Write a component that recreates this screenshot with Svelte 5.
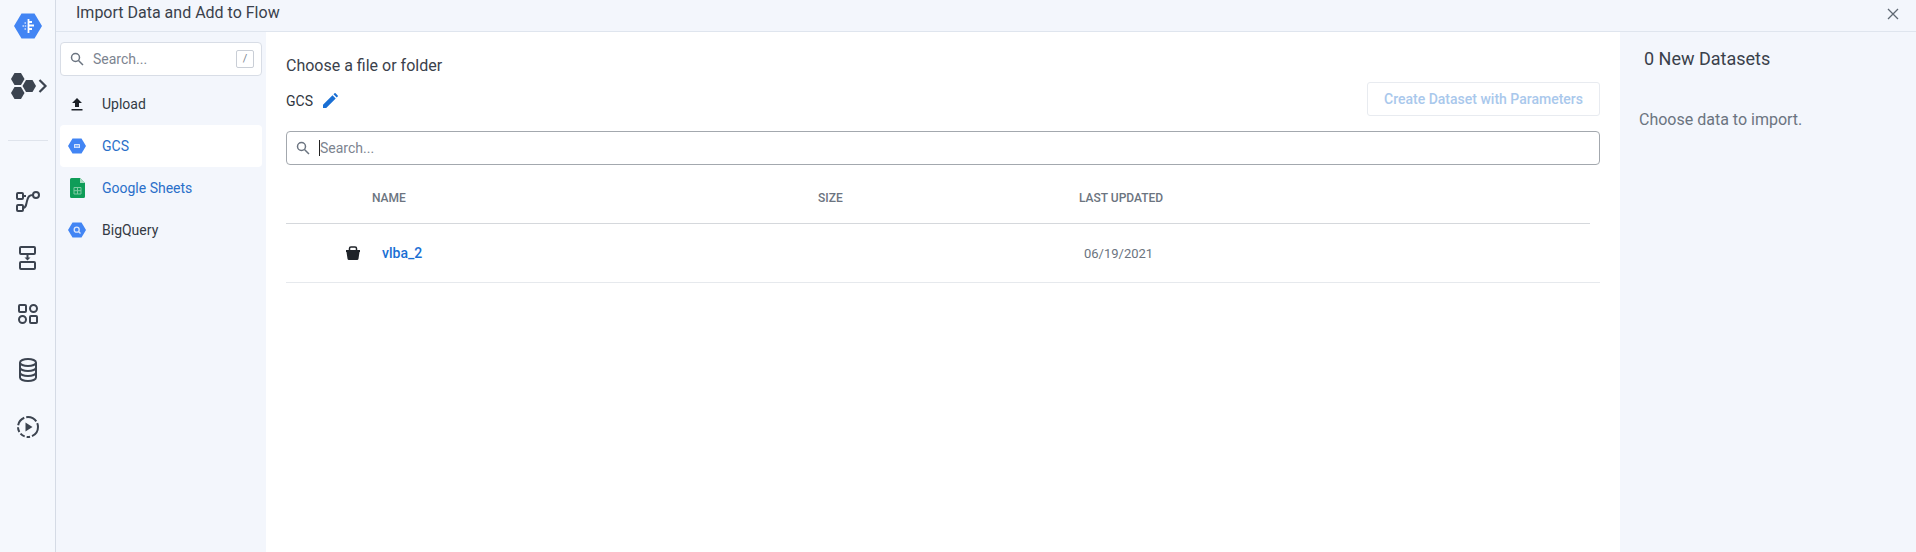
<script>
  const sources = [
    { name: 'Upload', icon: 'upload' },
    { name: 'GCS', icon: 'gcs', active: true, link: true },
    { name: 'Google Sheets', icon: 'sheets', link: true },
    { name: 'BigQuery', icon: 'bq' }
  ];
</script>

<div class="page">
  <nav class="rail">
    <svg class="logo" width="28" height="26" viewBox="0 0 28 26">
      <path d="M7.5 0.500h13L28 13l-7.500 12.500h-13L0 13z" fill="#4285f4" />
      <path d="M14.500 6v14" stroke="#fff" stroke-width="1.800" />
      <path d="M15 9h3M15 12.500h5M15 16h3" stroke="#fff" stroke-width="1.800" />
      <path d="M10.500 10h2M8.500 13h4M10.500 16h2" stroke="#cfe0fb" stroke-width="1.500" stroke-dasharray="1.500 .7" />
    </svg>
    <button class="hexes" aria-label="Apps">
      <svg width="38" height="28" viewBox="0 0 38 28">
        <g fill="#3c4450">
          <path d="M4.500 1h6.500l3.500 6-3.500 6H4.500L1 7z" />
          <path d="M4.500 15h6.500l3.500 6-3.500 6H4.500L1 21z" />
          <path d="M16 8h6.500l3.500 6-3.500 6H16l-3.500-6z" />
        </g>
        <path d="M29.500 8l6 6-6 6" fill="none" stroke="#3c4450" stroke-width="2.200" />
      </svg>
    </button>
    <div class="rail-rule"></div>
    <div class="rail-icons">
      <svg width="26" height="24" viewBox="0 0 26 24" fill="none" stroke="#3c4450" stroke-width="2">
        <rect x="2" y="3" width="6" height="6" rx="1" />
        <rect x="2" y="15" width="6" height="6" rx="1" />
        <circle cx="21" cy="5" r="3" />
        <path d="M8 6h3M8 18c3 0 3-3 4-7s2-6 6-6" />
      </svg>
      <svg width="24" height="26" viewBox="0 0 24 26" fill="none" stroke="#3c4450" stroke-width="2">
        <rect x="4" y="2" width="15" height="7" rx="1" />
        <rect x="4" y="17" width="15" height="7" rx="1" />
        <path d="M11.500 9v5" />
        <path d="M8.500 12.500h6l-3 3z" fill="#3c4450" stroke="none" />
      </svg>
      <svg width="24" height="24" viewBox="0 0 24 24" fill="none" stroke="#3c4450" stroke-width="2">
        <rect x="3" y="3" width="7" height="7" rx="1" />
        <circle cx="17.500" cy="6.500" r="3.500" />
        <circle cx="6.500" cy="17.500" r="3.500" />
        <rect x="14" y="14" width="7" height="7" rx="1" />
      </svg>
      <svg width="24" height="26" viewBox="0 0 24 26" fill="none" stroke="#3c4450" stroke-width="2">
        <ellipse cx="12" cy="5.500" rx="8" ry="3.500" />
        <path d="M4 5.500v15c0 2 3.500 3.500 8 3.500s8-1.500 8-3.500v-15" />
        <path d="M4 10.500c0 2 3.500 3.500 8 3.500s8-1.500 8-3.500M4 15.500c0 2 3.500 3.500 8 3.500s8-1.500 8-3.500" />
      </svg>
      <svg width="26" height="26" viewBox="0 0 26 26" fill="none" stroke="#3c4450" stroke-width="2">
        <circle cx="13" cy="13" r="10" stroke-dasharray="11.500 2 3.500 2 5 2 5 2 10 2 11.500 2" />
        <path d="M10.500 8.500l7 4.500-7 4.500z" fill="#3c4450" stroke="none" />
      </svg>
    </div>
  </nav>

  <div class="dialog">
    <header class="title-bar">
      <span>Import Data and Add to Flow</span>
      <svg width="12" height="12" viewBox="0 0 12 12" stroke="#5f6873" stroke-width="1.300"><path d="M1 1l10 10M11 1L1 11" /></svg>
    </header>

    <div class="body">
      <aside class="sources">
        <div class="source-search">
          <svg class="mag" width="14" height="14" viewBox="0 0 14 14" fill="none" stroke="#6b7480" stroke-width="1.500"><circle cx="5.500" cy="5.500" r="4" /><path d="M8.500 8.500l4.500 4.500" /></svg>
          <span class="placeholder">Search...</span>
          <kbd>/</kbd>
        </div>
        <ul>
          {#each sources as s}
            <li class:active={s.active} class:link={s.link}>
              <span class="src-icon">
                {#if s.icon === 'upload'}
                  <svg width="14" height="14" viewBox="0 0 14 14"><path d="M7 1l5 5H9v4H5V6H2z M1.500 12h11v1.500h-11z" fill="#1c2128" /></svg>
                {:else if s.icon === 'sheets'}
                  <svg width="15" height="20" viewBox="0 0 15 20">
                    <path d="M1.500 0H10l5 5v13.500a1.500 1.500 0 0 1-1.500 1.500h-12A1.500 1.500 0 0 1 0 18.500v-17A1.500 1.500 0 0 1 1.500 0z" fill="#0f9d58" />
                    <path d="M10 0l5 5h-5z" fill="#a8dcc0" />
                    <path d="M4 9.500h7v6.500H4zM7.500 9.500V16M4 12.700h7" fill="none" stroke="#7fcaa2" stroke-width="1" />
                  </svg>
                {:else}
                  <svg width="18" height="16" viewBox="0 0 18 16">
                    <path d="M4.500 0.500h9L18 8l-4.500 7.500h-9L0 8z" fill="#4285f4" />
                    {#if s.icon === 'gcs'}
                      <rect x="6" y="6" width="6" height="4" rx="0.500" fill="#dbe7fc" />
                      <path d="M7 7.500h4M7 8.700h4" stroke="#4285f4" stroke-width="0.600" />
                    {:else}
                      <circle cx="8.700" cy="7.700" r="2.500" fill="none" stroke="#dbe7fc" stroke-width="1.300" />
                      <path d="M10.500 9.500l2 2" stroke="#dbe7fc" stroke-width="1.300" />
                    {/if}
                  </svg>
                {/if}
              </span>
              {s.name}
            </li>
          {/each}
        </ul>
      </aside>

      <main class="main">
        <h2>Choose a file or folder</h2>
        <div class="crumb-row">
          <div class="crumb">
            <span>GCS</span>
            <svg width="16" height="16" viewBox="0 0 16 16"><path d="M1 15v-3.200L10.500 2.300l3.200 3.200L4.200 15zM11.500 1.300l1-1a.8.8 0 0 1 1.100 0l2.100 2.100a.8.8 0 0 1 0 1.100l-1 1z" fill="#1a6fd4" /></svg>
          </div>
          <button class="param-btn" disabled>Create Dataset with Parameters</button>
        </div>
        <div class="file-search">
          <svg class="mag" width="14" height="14" viewBox="0 0 14 14" fill="none" stroke="#6b7480" stroke-width="1.500"><circle cx="5.500" cy="5.500" r="4" /><path d="M8.500 8.500l4.500 4.500" /></svg>
          <span class="caret"></span>
          <span class="placeholder">Search...</span>
        </div>
        <div class="table-head">
          <span class="name-col">NAME</span>
          <span>SIZE</span>
          <span>LAST UPDATED</span>
        </div>
        <div class="table-row">
          <svg class="bucket" width="14" height="14" viewBox="0 0 14 14">
            <path d="M3.500 5V2.500A1.500 1.500 0 0 1 5 1h4a1.500 1.500 0 0 1 1.500 1.500V5" fill="none" stroke="#1f2329" stroke-width="1.500" />
            <path d="M0 4h14v2h-.5l-1 6.700a1.500 1.500 0 0 1-1.500 1.300H3a1.500 1.500 0 0 1-1.500-1.300L.5 6H0z" fill="#1f2329" />
          </svg>
          <a href="#top" class="bucket-name">vlba_2</a>
          <span></span>
          <span class="date">06/19/2021</span>
        </div>
      </main>

      <aside class="summary">
        <h3>0 New Datasets</h3>
        <p>Choose data to import.</p>
      </aside>
    </div>
  </div>
</div>

<style>
  :global(body) {
    margin: 0;
    background: #f3f6fc;
  }

  .page {
    display: flex;
    height: 552px;
    font-family: Roboto, "Liberation Sans", sans-serif;
    color: #2f3640;
    overflow: hidden;
  }

  .rail {
    width: 55px;
    flex: none;
    display: flex;
    flex-direction: column;
    align-items: center;
    border-right: 1px solid #d5dbe5;
    background: #f5f8fd;
  }
  .logo {
    margin-top: 13px;
    margin-left: 1px;
  }
  .hexes {
    margin: 33px 0 0 3px;
    padding: 0;
    border: 0;
    background: none;
    height: 28px;
    display: block;
  }
  .rail-rule {
    width: 40px;
    height: 1px;
    background: #dfe4ec;
    margin-top: 40px;
  }
  .rail-icons {
    display: flex;
    flex-direction: column;
    align-items: center;
    gap: 31px;
    margin-top: 49px;
  }

  .dialog {
    flex: 1;
    min-width: 0;
    display: flex;
    flex-direction: column;
  }
  .title-bar {
    height: 31px;
    flex: none;
    padding: 0 17px 0 20px;
    display: flex;
    align-items: center;
    justify-content: space-between;
    font-size: 16px;
    border-bottom: 1px solid #dfe5ee;
  }
  .title-bar span {
    margin-top: -6px;
    color: #3a414b;
  }
  .title-bar svg {
    margin-top: -3px;
  }
  .body {
    flex: 1;
    display: flex;
    min-height: 0;
  }

  .sources {
    width: 210px;
    flex: none;
    padding: 10px 0 0 4px;
    box-sizing: border-box;
  }
  .source-search {
    width: 202px;
    height: 34px;
    box-sizing: border-box;
    background: #fff;
    border: 1px solid #d8dde6;
    border-radius: 4px;
    display: flex;
    align-items: center;
    padding: 0 7px 0 9px;
    font-size: 14px;
  }
  .placeholder {
    color: #7c8490;
    font-size: 14px;
  }
  .source-search .placeholder {
    margin-left: 9px;
    flex: 1;
  }
  kbd {
    width: 16px;
    height: 16px;
    border: 1px solid #c9ced6;
    border-radius: 2px;
    font: 11px Roboto, sans-serif;
    color: #7c8490;
    text-align: center;
    line-height: 16px;
  }
  .sources ul {
    list-style: none;
    margin: 7px 0 0;
    padding: 0;
  }
  .sources li {
    width: 202px;
    height: 42px;
    display: flex;
    align-items: center;
    font-size: 14px;
    border-radius: 4px;
    color: #333a44;
  }
  .sources li.link {
    color: #2a6fc9;
  }
  .sources li.active {
    background: #fff;
  }
  .src-icon {
    width: 34px;
    flex: none;
    display: flex;
    justify-content: center;
    margin-right: 8px;
  }

  .main {
    flex: 1;
    min-width: 0;
    background: #fff;
    padding: 0 20px;
  }
  h2 {
    font-size: 16px;
    font-weight: 400;
    margin: 0;
    padding-top: 24px;
    line-height: 19px;
    color: #3a414b;
  }
  .crumb-row {
    display: flex;
    justify-content: space-between;
    height: 34px;
    margin-top: 7px;
    margin-bottom: 15px;
  }
  .crumb {
    display: flex;
    align-items: center;
    gap: 9px;
    font-size: 14px;
    height: 25px;
    margin-top: 6px;
  }
  .param-btn {
    width: 233px;
    height: 34px;
    background: #fff;
    border: 1px solid #e8ebf0;
    border-radius: 3px;
    color: #a9c8ec;
    font: 500 14px Roboto, sans-serif;
  }
  .file-search {
    height: 34px;
    box-sizing: border-box;
    border: 1px solid #a3a8ae;
    border-radius: 4px;
    display: flex;
    align-items: center;
    padding-left: 9px;
  }
  .caret {
    width: 1px;
    height: 16px;
    background: #222;
    margin-left: 9px;
  }
  .table-head,
  .table-row {
    display: grid;
    align-items: center;
  }
  .table-head {
    height: 59px;
    box-sizing: border-box;
    margin-right: 10px;
    padding: 8px 0 0 86px;
    grid-template-columns: 446px 261px 1fr;
    font-size: 12px;
    font-weight: 500;
    color: #6b7480;
    border-bottom: 1px solid #d5d8dc;
  }
  .table-row {
    position: relative;
    height: 59px;
    box-sizing: border-box;
    padding-left: 96px;
    grid-template-columns: 437px 265px 1fr;
    border-bottom: 1px solid #e6e9ed;
    font-size: 13px;
  }
  .bucket {
    position: absolute;
    left: 60px;
    top: 22px;
  }
  .bucket-name {
    color: #1a6fd4;
    font-size: 14px;
    font-weight: 500;
    text-decoration: none;
  }
  .date {
    color: #6b7480;
    font-size: 13px;
  }

  .summary {
    width: 296px;
    flex: none;
    padding: 16px 0 0;
    box-sizing: border-box;
  }
  h3 {
    font-size: 18px;
    font-weight: 400;
    margin: 0 0 0 24px;
    line-height: 22px;
    color: #3a414b;
  }
  .summary p {
    margin: 40px 0 0 19px;
    font-size: 16px;
    line-height: 19px;
    color: #6b7480;
  }
</style>
